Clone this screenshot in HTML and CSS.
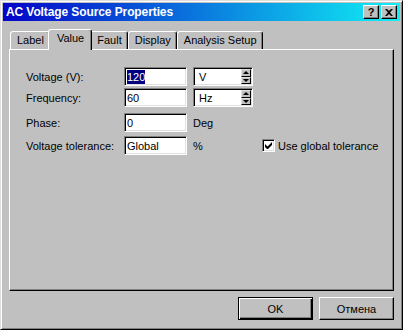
FILE: index.html
```html
<!DOCTYPE html>
<html lang="en">
<head>
    <meta charset="UTF-8">
    <title>AC Voltage Source Properties</title>
    <link rel="stylesheet" href="styles.css">
</head>
<body>
    <div class="window">
        <div class="titlebar">
            <span class="title">AC Voltage Source Properties</span>
            <span class="title-btn help">?</span>
            <span class="title-btn">
                <svg width="8" height="7" viewBox="0 0 8 7"><path d="M0 0h2l2 2 2-2h2L5 3.5 8 7H6L4 5 2 7H0l3-3.5z" fill="#000"/></svg>
            </span>
        </div>
        <div class="dialog">
            <div class="tabs">
                <div class="tab">Label</div>
                <div class="tab active">Value</div>
                <div class="tab">Fault</div>
                <div class="tab">Display</div>
                <div class="tab">Analysis Setup</div>
            </div>
            <div class="panel">
                <div class="form">
                    <span class="lbl">Voltage (V):</span>
                    <div class="edit"><span class="sel">120</span></div>
                    <div class="combo">
                        <span class="combo-text">V</span>
                        <div class="spin"><span class="spin-btn up"></span><span class="spin-btn down"></span></div>
                    </div>
                    <span></span>

                    <span class="lbl">Frequency:</span>
                    <div class="edit">60</div>
                    <div class="combo">
                        <span class="combo-text">Hz</span>
                        <div class="spin"><span class="spin-btn up"></span><span class="spin-btn down"></span></div>
                    </div>
                    <span></span>

                    <span class="lbl">Phase:</span>
                    <div class="edit">0</div>
                    <span class="lbl">Deg</span>
                    <span></span>

                    <span class="lbl">Voltage tolerance:</span>
                    <div class="edit">Global</div>
                    <span class="lbl">%</span>
                    <label class="check">
                        <span class="check-box">
                            <svg width="7" height="7" viewBox="0 0 7 7"><path d="M0 2v3l2 2h1l4-4V0L2.5 4.5z" fill="#000"/></svg>
                        </span>
                        Use global tolerance
                    </label>
                </div>
            </div>
            <div class="buttons">
                <button class="btn default">OK</button>
                <button class="btn">Отмена</button>
            </div>
        </div>
    </div>
</body>
</html>
```

FILE: styles.css
```css
body {
    margin: 0;
    font-family: "Liberation Sans", Arial, sans-serif;
    font-size: 11px;
    color: #000;
}
.window {
    width: 403px;
    height: 330px;
    box-sizing: border-box;
    background: #c0c0c0;
    border: 1px solid;
    border-color: #dfdfdf #000 #000 #dfdfdf;
    box-shadow: inset 1px 1px #fff, inset -1px -1px #808080;
    padding: 2px;
    display: flex;
    flex-direction: column;
}
.titlebar {
    height: 18px;
    display: flex;
    align-items: center;
    padding: 0 3px 0 3px;
    background: linear-gradient(to right, #0404c8, #10f0f4);
    color: #fff;
}
.title {
    flex: 1;
    font-weight: bold;
    font-size: 12px;
    letter-spacing: -0.1px;
}
.title-btn {
    width: 16px;
    height: 14px;
    box-sizing: border-box;
    background: #c0c0c0;
    border: 1px solid;
    border-color: #fff #000 #000 #fff;
    box-shadow: inset -1px -1px #808080;
    color: #000;
    display: flex;
    align-items: center;
    justify-content: center;
    font-weight: bold;
    font-size: 11px;
}
.help {
    margin-right: 2px;
}
.dialog {
    flex: 1;
    display: flex;
    flex-direction: column;
    padding: 8px 6px 7px;
}
.tabs {
    display: flex;
    align-items: flex-end;
    height: 20px;
    padding-left: 1px;
}
.tab {
    height: 18px;
    box-sizing: border-box;
    padding: 0 5px 0 6px;
    border: 1px solid;
    border-bottom: 0;
    border-color: #fff #000 transparent #fff;
    box-shadow: inset -1px 0 #808080;
    border-radius: 3px 3px 0 0;
    line-height: 17px;
    background: #c0c0c0;
}
.tab.active {
    height: 21px;
    margin: 0 -2px -1px;
    padding: 0 7px 0 8px;
    line-height: 17px;
    position: relative;
    z-index: 1;
}
.panel {
    flex: 1;
    border: 1px solid;
    border-color: #fff #000 #000 #fff;
    box-shadow: inset -1px -1px #808080;
    padding: 17px 0 0 16px;
}
.form {
    display: grid;
    grid-template-columns: 98px 69px 69px auto;
    grid-template-rows: 21px 25px 23px 19px;
    align-items: start;
}
.lbl {
    height: 19px;
    display: flex;
    align-items: center;
}
.edit,
.combo {
    height: 19px;
    box-sizing: border-box;
    background: #fff;
    border: 1px solid;
    border-color: #808080 #fff #fff #808080;
    box-shadow: inset 1px 1px #000, inset -1px -1px #dfdfdf;
    display: flex;
    align-items: center;
}
.edit {
    width: 63px;
    padding-left: 2px;
}
.sel {
    background: #000080;
    color: #fff;
    line-height: 14px;
}
.combo {
    width: 60px;
    padding: 1px 1px 1px 0;
    align-items: stretch;
}
.combo-text {
    flex: 1;
    display: flex;
    align-items: center;
    padding-left: 5px;
}
.spin {
    width: 10px;
    display: flex;
    flex-direction: column;
}
.spin-btn {
    flex: 1;
    box-sizing: border-box;
    background: #c0c0c0;
    border: 1px solid;
    border-color: #dfdfdf #000 #000 #dfdfdf;
    display: flex;
    align-items: center;
    justify-content: center;
}
.spin-btn::after {
    content: "";
    border-left: 3px solid transparent;
    border-right: 3px solid transparent;
}
.up::after {
    border-bottom: 3px solid #000;
}
.down::after {
    border-top: 3px solid #000;
}
.check {
    height: 19px;
    display: flex;
    align-items: center;
    gap: 3px;
    white-space: nowrap;
}
.check-box {
    width: 13px;
    height: 13px;
    box-sizing: border-box;
    background: #fff;
    border: 1px solid;
    border-color: #808080 #fff #fff #808080;
    box-shadow: inset 1px 1px #000, inset -1px -1px #dfdfdf;
    display: flex;
    align-items: center;
    justify-content: center;
}
.buttons {
    display: flex;
    justify-content: flex-end;
    gap: 6px;
    margin-top: 6px;
}
.btn {
    width: 75px;
    height: 23px;
    padding: 0;
    font: inherit;
    color: #000;
    background: #c0c0c0;
    border: 1px solid;
    border-color: #fff #000 #000 #fff;
    box-shadow: inset -1px -1px #808080;
}
.btn.default {
    border-color: #000;
    box-shadow: inset 1px 1px #fff, inset -1px -1px #000, inset -2px -2px #808080;
}
```
